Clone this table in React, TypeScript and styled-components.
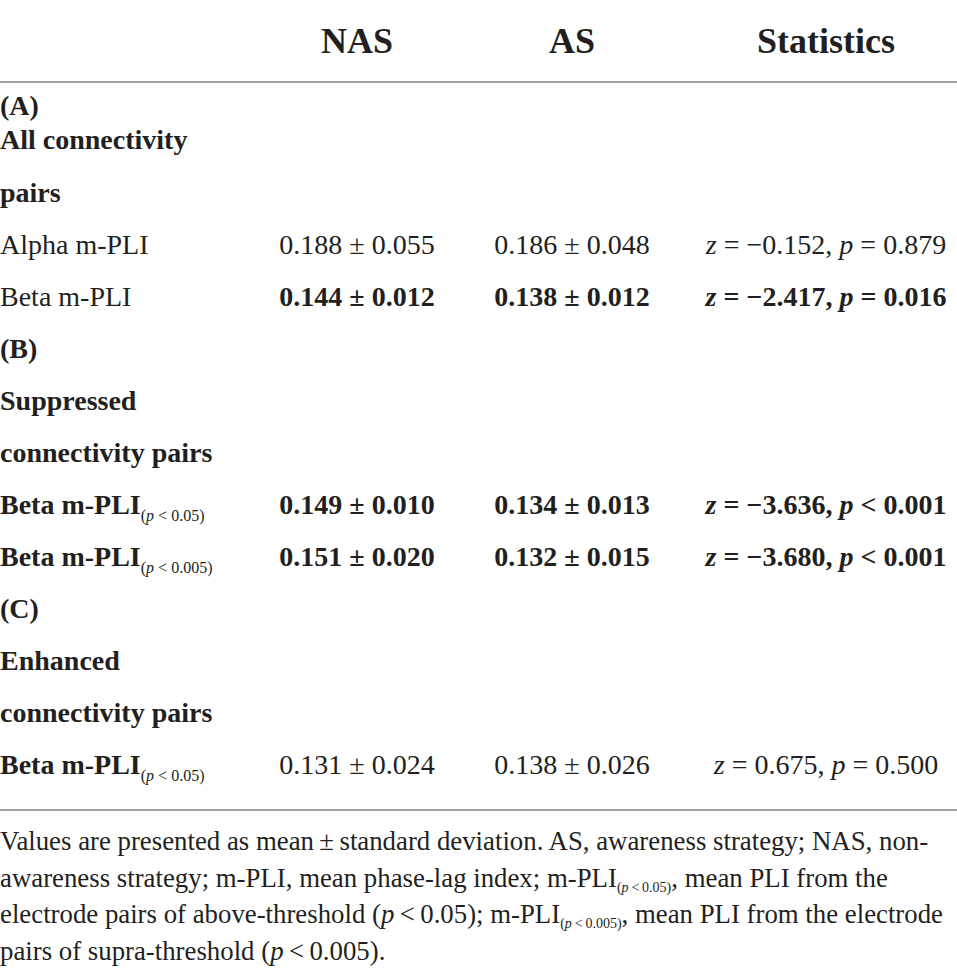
import React from "react";
import styled, { createGlobalStyle } from "styled-components";

const GlobalStyle = createGlobalStyle`
  html, body {
    margin: 0;
    padding: 0;
    background: #ffffff;
  }
  body {
    font-family: "Liberation Serif", "Times New Roman", serif;
    color: #231f20;
  }
`;

const Page = styled.div`
  width: 957px;
  background: #ffffff;
`;

const Grid = styled.div`
  display: grid;
  grid-template-columns: 249px 216px 214px 1fr;
`;

const HeadRow = styled(Grid)`
  padding: 21px 0 20px;
  border-bottom: 2px solid #a3a3a3;
`;

const HeadCell = styled.div<{ $shift?: number }>`
  font-size: 36px;
  font-weight: 700;
  line-height: 40px;
  text-align: center;
  padding-left: ${(p) => p.$shift ?? 0}px;
`;

const Body = styled.div`
  padding-bottom: 18px;
  border-bottom: 2px solid #a3a3a3;
`;

const Row = styled(Grid)<{ $compact?: boolean }>`
  font-size: 28px;
  line-height: ${(p) => (p.$compact ? "34px" : "52px")};
  height: ${(p) => (p.$compact ? "68px" : "52px")};
  padding: ${(p) => (p.$compact ? "6px 0 10px" : "0")};
`;

const Label = styled.div<{ $bold?: boolean }>`
  font-weight: ${(p) => (p.$bold ? 700 : 400)};
  white-space: nowrap;
`;

const Value = styled.div<{ $bold?: boolean; $shift?: number }>`
  font-weight: ${(p) => (p.$bold ? 700 : 400)};
  text-align: center;
  white-space: nowrap;
  padding-left: ${(p) => p.$shift ?? 0}px;
`;

const Var = styled.i`
  font-style: italic;
`;

const Sub = styled.span<{ $size?: number; $drop?: number }>`
  font-size: ${(p) => p.$size ?? 16}px;
  font-weight: 400;
  line-height: 1;
  vertical-align: ${(p) => -(p.$drop ?? 7)}px;
`;

const Note = styled.p`
  margin: 12px 0 0;
  font-size: 26.8px;
  line-height: 36.5px;
  white-space: nowrap;
`;

const Threshold = ({ v, size, drop }: { v: string; size?: number; drop?: number }) => (
  <Sub $size={size} $drop={drop}>
    (<Var>p</Var> &lt; {v})
  </Sub>
);

type Stat = { z: string; p: string; op: string };

const StatText = ({ s }: { s: Stat }) => (
  <>
    <Var>z</Var> = {s.z}, <Var>p</Var> {s.op} {s.p}
  </>
);

type DataRow = {
  label: React.ReactNode;
  bold?: boolean;
  labelBold?: boolean;
  nas: string;
  as: string;
  stat: Stat;
};

const Section = ({ text }: { text: string }) => (
  <Row>
    <Label $bold>{text}</Label>
  </Row>
);

const Data = ({ r }: { r: DataRow }) => (
  <Row>
    <Label $bold={r.labelBold}>{r.label}</Label>
    <Value $bold={r.bold}>{r.nas}</Value>
    <Value $bold={r.bold}>{r.as}</Value>
    <Value $bold={r.bold} $shift={16}>
      <StatText s={r.stat} />
    </Value>
  </Row>
);

export default function App() {
  return (
    <Page>
      <GlobalStyle />
      <HeadRow>
        <HeadCell />
        <HeadCell>NAS</HeadCell>
        <HeadCell>AS</HeadCell>
        <HeadCell $shift={16}>Statistics</HeadCell>
      </HeadRow>
      <Body>
        <Row $compact>
          <Label $bold>
            (A)
            <br />
            All connectivity
          </Label>
        </Row>
        <Section text="pairs" />
        <Data
          r={{
            label: "Alpha m-PLI",
            nas: "0.188 ± 0.055",
            as: "0.186 ± 0.048",
            stat: { z: "\u22120.152", op: "=", p: "0.879" },
          }}
        />
        <Data
          r={{
            label: "Beta m-PLI",
            bold: true,
            nas: "0.144 ± 0.012",
            as: "0.138 ± 0.012",
            stat: { z: "\u22122.417", op: "=", p: "0.016" },
          }}
        />
        <Section text="(B)" />
        <Section text="Suppressed" />
        <Section text="connectivity pairs" />
        <Data
          r={{
            label: (
              <>
                Beta m-PLI
                <Threshold v="0.05" />
              </>
            ),
            labelBold: true,
            bold: true,
            nas: "0.149 ± 0.010",
            as: "0.134 ± 0.013",
            stat: { z: "\u22123.636", op: "<", p: "0.001" },
          }}
        />
        <Data
          r={{
            label: (
              <>
                Beta m-PLI
                <Threshold v="0.005" />
              </>
            ),
            labelBold: true,
            bold: true,
            nas: "0.151 ± 0.020",
            as: "0.132 ± 0.015",
            stat: { z: "\u22123.680", op: "<", p: "0.001" },
          }}
        />
        <Section text="(C)" />
        <Section text="Enhanced" />
        <Section text="connectivity pairs" />
        <Data
          r={{
            label: (
              <>
                Beta m-PLI
                <Threshold v="0.05" />
              </>
            ),
            labelBold: true,
            nas: "0.131 ± 0.024",
            as: "0.138 ± 0.026",
            stat: { z: "0.675", op: "=", p: "0.500" },
          }}
        />
      </Body>
      <Note>
        Values are presented as mean{"\u2009"}±{"\u2009"}standard deviation. AS, awareness strategy; NAS, non-
        <br />
        awareness strategy; m-PLI, mean phase-lag index; m-PLI
        <Sub $size={14} $drop={5}>
          (<Var>p</Var>{"\u2009"}&lt;{"\u2009"}0.05)
        </Sub>
        , mean PLI from the
        <br />
        electrode pairs of above-threshold (<Var>p</Var>{"\u2009"}&lt;{"\u2009"}0.05); m-PLI
        <Sub $size={14} $drop={5}>
          (<Var>p</Var>{"\u2009"}&lt;{"\u2009"}0.005)
        </Sub>
        , mean PLI from the electrode
        <br />
        pairs of supra-threshold (<Var>p</Var>{"\u2009"}&lt;{"\u2009"}0.005).
      </Note>
    </Page>
  );
}
